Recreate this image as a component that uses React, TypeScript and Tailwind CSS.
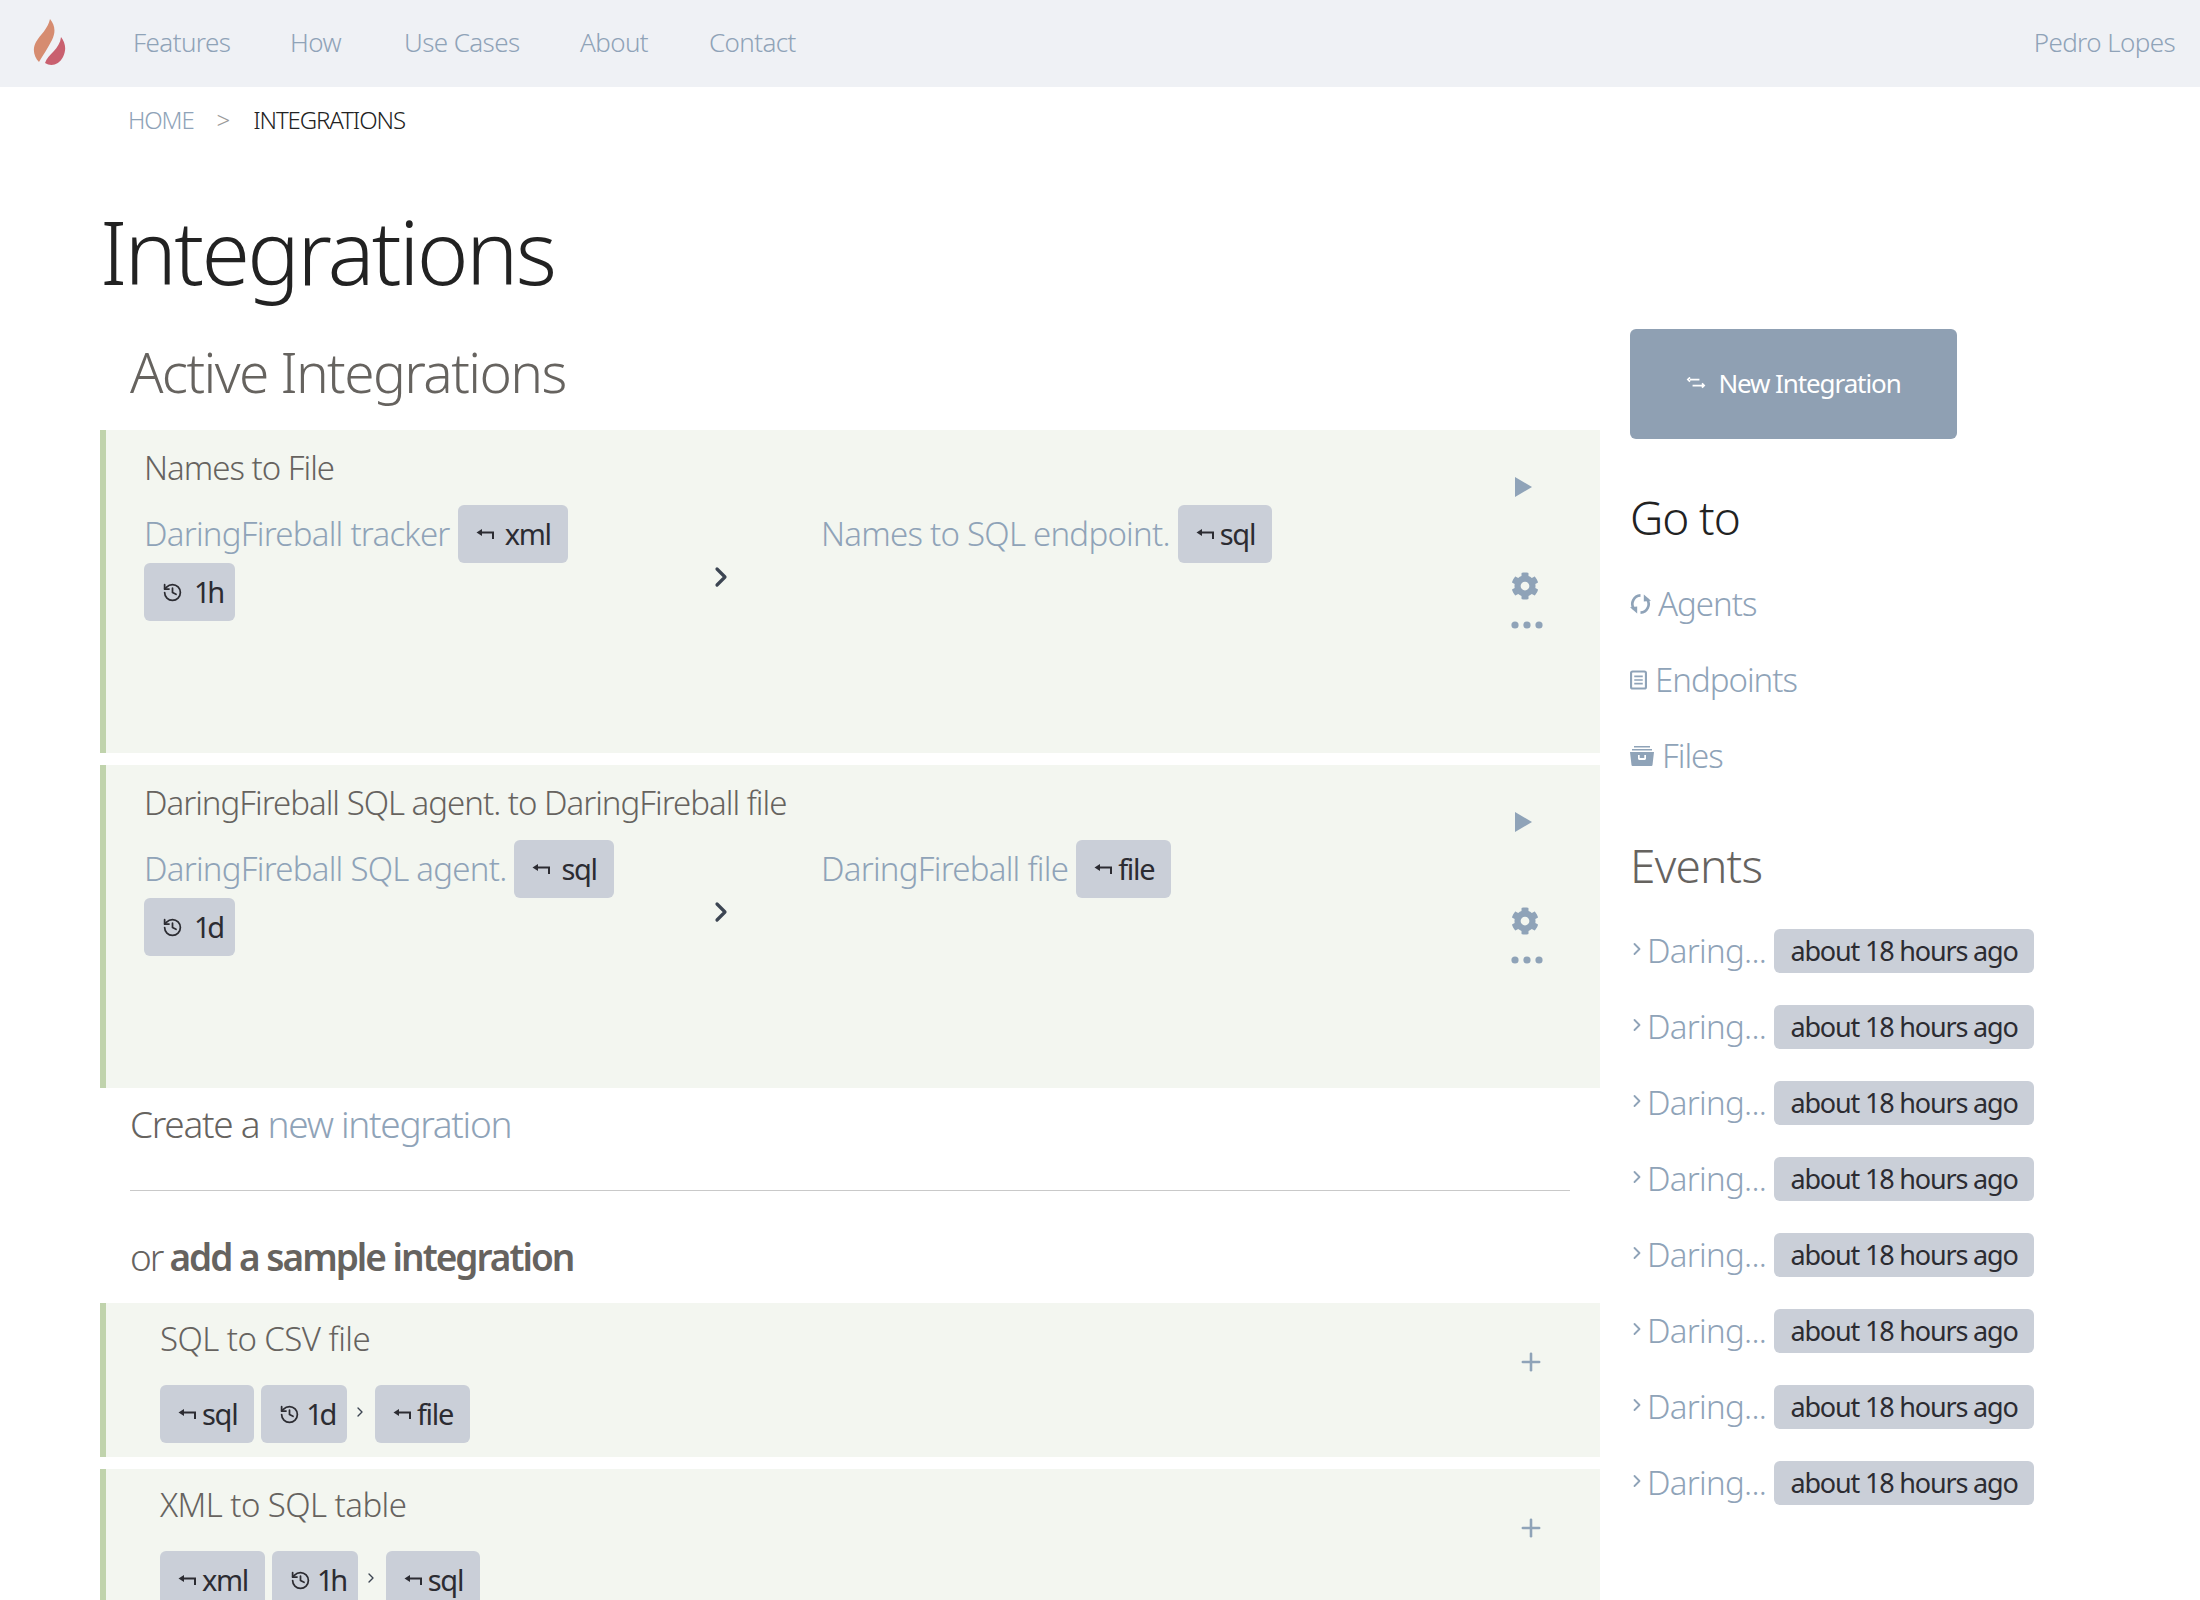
import { Plus, ChevronRight, History } from 'lucide-react'
import { FaCog } from 'react-icons/fa'

function PortIcon() {
  return (
    <svg viewBox="0 0 18 10" className="h-[10px] w-[18px] shrink-0" fill="none" stroke="currentColor" strokeWidth="2">
      <path d="M17 10V3.5H4" />
      <path d="M6 0L0.5 3.5L6 7Z" fill="currentColor" stroke="none" />
    </svg>
  )
}

function Tag({ children, className = '' }: { children: React.ReactNode; className?: string }) {
  return (
    <span className={`flex h-[58px] items-center rounded-[6px] bg-[#cacfd8] pl-[18px] text-[29px] font-normal tracking-[-1.3px] text-[#2c2c32] ${className}`}>
      {children}
    </span>
  )
}

function PortTag({ label, wide }: { label: string; wide?: boolean }) {
  return (
    <Tag className={`pr-[17px] ${wide ? 'gap-[11px]' : 'gap-[6px]'}`}>
      <PortIcon />
      <span>{label}</span>
    </Tag>
  )
}

function TimeTag({ label, wide, className = '' }: { label: string; wide?: boolean; className?: string }) {
  return (
    <Tag className={`pr-[13px] ${wide ? 'gap-[11px]' : 'gap-[6px]'} ${className}`}>
      <History size={21} strokeWidth={2} />
      <span className="tracking-[-3.4px]">{label}</span>
    </Tag>
  )
}

function ActivePanel({ title, from, fromTag, time, to, toTag }: {
  title: string
  from: string
  fromTag: string
  time: string
  to: string
  toTag: string
}) {
  return (
    <div className="flex h-[323px] flex-col border-l-[6px] border-[#c0d3ac] bg-[#f3f6f0] pl-[38px]">
      <h3 className="mt-[18px] h-[57px] text-[33px] leading-[40px] text-[#66635f]">{title}</h3>
      <div className="flex">
        <div className="flex w-[561px] flex-col">
          <div className="flex h-[58px] items-center gap-[8px]">
            <a className="text-[33px] tracking-[-0.75px] text-[#8fa3b8]">{from}</a>
            <PortTag label={fromTag} wide />
          </div>
          <div className="flex">
            <TimeTag label={time} wide />
          </div>
        </div>
        <div className="w-[116px] pt-[56px] text-[#3c4552]">
          <ChevronRight size={32} strokeWidth={2.4} />
        </div>
        <div className="flex w-[690px] items-start gap-[8px]">
          <a className="text-[33px] leading-[58px] tracking-[-0.75px] text-[#8fa3b8]">{to}</a>
          <PortTag label={toTag} />
        </div>
        <div className="-mt-[28px] flex flex-col text-[#8fa3b8]">
          <svg viewBox="0 0 17 20" className="ml-[4px] h-[20px] w-[17px]" fill="currentColor">
            <path d="M0 0L17 10L0 20Z" />
          </svg>
          <FaCog size={28} className="mt-[75px]" />
          <svg viewBox="0 0 32 8" className="mt-[21px] h-[8px] w-[32px]" fill="currentColor">
            <circle cx="4" cy="4" r="3.6" />
            <circle cx="16" cy="4" r="3.6" />
            <circle cx="28" cy="4" r="3.6" />
          </svg>
        </div>
      </div>
    </div>
  )
}

function SamplePanel({ title, tags }: { title: string; tags: { a: string; t: string; b: string } }) {
  return (
    <div className="flex h-[154px] border-l-[6px] border-[#c0d3ac] bg-[#f3f6f0] pl-[54px]">
      <div className="flex-1">
        <h3 className="mt-[16px] h-[66px] text-[33px] leading-[40px] tracking-[-0.55px] text-[#66635f]">{title}</h3>
        <div className="flex items-center">
          <PortTag label={tags.a} />
          <TimeTag label={tags.t} className="ml-[7px]" />
          <ChevronRight size={16} strokeWidth={2} className="ml-[5px] mr-[7px] mb-[4px] text-[#3c4552]" />
          <PortTag label={tags.b} />
        </div>
      </div>
      <Plus size={28} strokeWidth={2.2} className="mt-[45px] mr-[55px] text-[#8fa3b8]" />
    </div>
  )
}

function EventRow() {
  return (
    <div className="flex h-[76px] items-center">
      <ChevronRight size={20} strokeWidth={2.2} className="-ml-[3px] mb-[4px] text-[#8fa3b8]" />
      <a className="w-[127px] text-[33px] tracking-[-0.7px] text-[#8fa3b8]">Daring...</a>
      <span className="flex h-[44px] w-[260px] items-center justify-center rounded-[6px] bg-[#cacfd8] text-[27px] font-normal tracking-[-1.18px] text-[#2c2c32]">
        about 18 hours ago
      </span>
    </div>
  )
}

export default function App() {
  return (
    <div className="h-screen overflow-hidden bg-white font-['Noto_Sans',sans-serif] font-light tracking-[-1px]">
      <nav className="flex h-[87px] items-center bg-[#eff1f5] pb-[3px] pr-[25px] text-[26px] tracking-[-0.6px] text-[#8fa3b8]">
        <svg viewBox="0 0 40 55" className="ml-[30px] mr-[63px] h-[55px] w-[40px] blur-[0.5px]">
          <path d="M20 4C25 10 26 17 22 25C18 33 13 40 9 47C4 42 2 34 6 27C10 20 18 14 20 4Z" fill="#d68c70" />
          <path d="M31 22C35 27 37 34 33 42C29 50 21 52 15 48C18 39 30 34 31 22Z" fill="#c9606f" />
        </svg>
        <a className="w-[157px]">Features</a>
        <a className="w-[114px]">How</a>
        <a className="w-[176px]">Use Cases</a>
        <a className="w-[129px]">About</a>
        <a>Contact</a>
        <a className="ml-auto">Pedro Lopes</a>
      </nav>
      <div className="flex h-[66px] items-center pl-[128px] text-[24px] tracking-[-1.1px]">
        <a className="text-[#8fa3b8]">HOME</a>
        <span className="ml-[23px] mr-[24px] text-[#9a9a9a]">&gt;</span>
        <span className="text-[#222222]">INTEGRATIONS</span>
      </div>
      <h1 className="ml-[100px] mt-[43px] text-[88px] leading-[110px] tracking-[-2.75px] text-[#222222]">Integrations</h1>
      <div className="flex pl-[100px]">
        <main className="w-[1500px]">
          <h2 className="ml-[30px] mt-[31px] h-[93px] text-[55px] leading-[70px] tracking-[-1.6px] text-[#66635f]">Active Integrations</h2>
          <div className="flex flex-col gap-[12px]">
            <ActivePanel title="Names to File" from="DaringFireball tracker" fromTag="xml" time="1h" to="Names to SQL endpoint." toTag="sql" />
            <ActivePanel title="DaringFireball SQL agent. to DaringFireball file" from="DaringFireball SQL agent." fromTag="sql" time="1d" to="DaringFireball file" toTag="file" />
          </div>
          <p className="ml-[30px] mt-[11px] text-[37px] leading-[50px] tracking-[-1.3px] text-[#66635f]">
            Create a <a className="text-[#8fa3b8]">new integration</a>
          </p>
          <hr className="ml-[30px] mr-[30px] mt-[41px] border-[#c9c9c9]" />
          <p className="ml-[30px] mt-[41px] text-[37px] leading-[50px] tracking-[-2.2px] text-[#66635f]">
            or <strong className="font-semibold tracking-[-2px]">add a sample integration</strong>
          </p>
          <div className="mt-[21px] flex flex-col gap-[12px]">
            <SamplePanel title="SQL to CSV file" tags={{ a: 'sql', t: '1d', b: 'file' }} />
            <SamplePanel title="XML to SQL table" tags={{ a: 'xml', t: '1h', b: 'sql' }} />
          </div>
        </main>
        <aside className="ml-[30px] w-[420px] pt-[23px]">
          <button className="flex h-[110px] w-[327px] items-center justify-center gap-[12px] rounded-[6px] bg-[#8fa0b3] pb-[2px] text-[26px] font-normal tracking-[-1.1px] text-white">
            <svg viewBox="0 0 20 14" className="h-[12px] w-[20px]" fill="none" stroke="currentColor" strokeWidth="2">
              <path d="M3 3H14M3 0.5L0.5 3L3 5.5M6 10H18M17 7.5L19.5 10L17 12.5" />
            </svg>
            New Integration
          </button>
          <h3 className="mt-[49px] text-[46px] leading-[58px] tracking-[-1.1px] text-[#222222]">Go to</h3>
          <div className="mt-[20px] flex h-[76px] items-center gap-[7px] text-[33px] text-[#8fa3b8]">
            <svg viewBox="0 0 22 22" className="h-[22px] w-[21px]" fill="none" stroke="currentColor" strokeWidth="2.8">
              <path d="M11 2A9 9 0 0 0 4 16" />
              <path d="M11 20A9 9 0 0 0 18 6" />
              <path d="M0 14.5L7.5 13.5V21Z" fill="currentColor" stroke="none" />
              <path d="M22 7.5L14.5 8.5V1Z" fill="currentColor" stroke="none" />
            </svg>
            <a>Agents</a>
          </div>
          <div className="flex h-[76px] items-center gap-[8px] text-[33px] text-[#8fa3b8]">
            <svg viewBox="0 0 16 18" className="h-[20px] w-[17px]" fill="none" stroke="currentColor" strokeWidth="2">
              <rect x="1" y="1" width="14" height="16" rx="1.5" />
              <path d="M4 5.5H12M4 9H12M4 12.5H12" strokeWidth="1.6" />
            </svg>
            <a>Endpoints</a>
          </div>
          <div className="flex h-[76px] items-center gap-[8px] text-[33px] text-[#8fa3b8]">
            <svg viewBox="0 0 24 20" className="h-[20px] w-[24px]" fill="currentColor">
              <path d="M4 0H20V1.5H4ZM2 3H22V4.5H2ZM0 6H24L22.5 19C22.4 19.6 22 20 21.4 20H2.6C2 20 1.6 19.6 1.5 19ZM8 9V12.5C8 13.3 8.7 14 9.5 14H14.5C15.3 14 16 13.3 16 12.5V9H14.3V12H9.7V9Z" fillRule="evenodd" />
            </svg>
            <a>Files</a>
          </div>
          <h3 className="mt-[42px] text-[46px] leading-[58px] tracking-[-0.8px] text-[#66635f]">Events</h3>
          <div className="mt-[19px] flex flex-col">
            {Array.from({ length: 8 }).map((_, i) => (
              <EventRow key={i} />
            ))}
          </div>
        </aside>
      </div>
    </div>
  )
}
